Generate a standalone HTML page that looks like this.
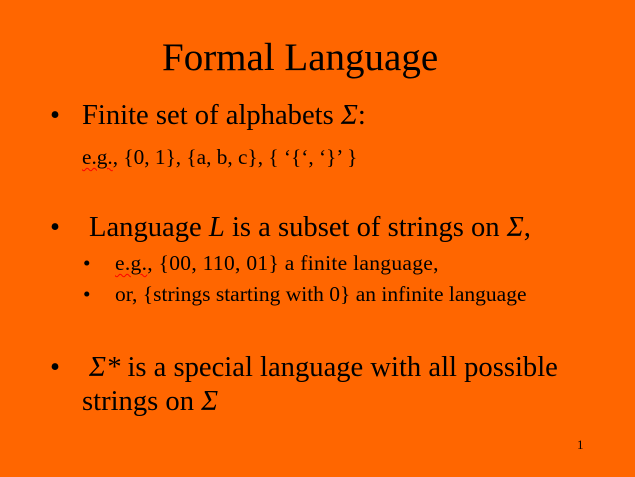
<!DOCTYPE html>
<html><head><style>
body{margin:0;width:635px;height:477px;background:#ff6600;overflow:hidden;position:relative;font-family:"Liberation Serif",serif;color:#000}
.t{position:absolute;white-space:nowrap;line-height:1}
.sq{text-decoration:underline wavy red;text-decoration-thickness:1px;text-underline-offset:3px}
</style></head><body>
<div class="t" style="left:162px;top:38px;font-size:39px">Formal Language</div>
<div class="t" style="left:50px;top:102px;font-size:28.6px">•</div>
<div class="t" style="left:82px;top:102px;font-size:28.6px">Finite set of alphabets <i>Σ</i>:</div>
<div class="t" style="left:82px;top:147px;font-size:21.3px"><span class="sq">e.g.</span>, {0, 1}, {a, b, c}, { ‘{‘, ‘}’ }</div>
<div class="t" style="left:50px;top:214px;font-size:28.6px">•</div>
<div class="t" style="left:89px;top:214px;font-size:28.6px">Language <i>L</i> is a subset of strings on <i>Σ</i>,</div>
<div class="t" style="left:83px;top:253px;font-size:21.5px">•</div>
<div class="t" style="left:115px;top:253px;font-size:21.5px;letter-spacing:0.3px"><span class="sq">e.g.</span>, {00, 110, 01} a finite language,</div>
<div class="t" style="left:83px;top:284px;font-size:21.5px">•</div>
<div class="t" style="left:115px;top:284px;font-size:21.5px">or, {strings starting with 0} an infinite language</div>
<div class="t" style="left:50px;top:354px;font-size:28.6px">•</div>
<div class="t" style="left:89px;top:354px;font-size:28.6px"><i>Σ*</i> is a special language with all possible</div>
<div class="t" style="left:82px;top:388px;font-size:28.6px">strings on <i>Σ</i></div>
<div class="t" style="left:577px;top:438px;font-size:13px">1</div>
</body></html>
